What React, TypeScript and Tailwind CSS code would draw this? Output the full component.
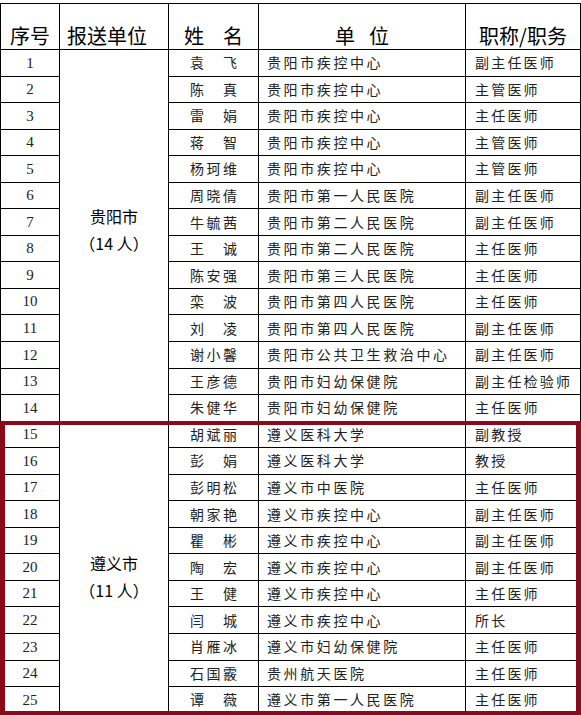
import React from "react";

type Row = { no: number; name: string; unit: string; title: string };

const rows: Row[] = [
  { no: 1, name: "袁飞", unit: "贵阳市疾控中心", title: "副主任医师" },
  { no: 2, name: "陈真", unit: "贵阳市疾控中心", title: "主管医师" },
  { no: 3, name: "雷娟", unit: "贵阳市疾控中心", title: "主任医师" },
  { no: 4, name: "蒋智", unit: "贵阳市疾控中心", title: "主管医师" },
  { no: 5, name: "杨珂维", unit: "贵阳市疾控中心", title: "主管医师" },
  { no: 6, name: "周晓倩", unit: "贵阳市第一人民医院", title: "副主任医师" },
  { no: 7, name: "牛毓茜", unit: "贵阳市第二人民医院", title: "副主任医师" },
  { no: 8, name: "王诚", unit: "贵阳市第二人民医院", title: "主任医师" },
  { no: 9, name: "陈安强", unit: "贵阳市第三人民医院", title: "主任医师" },
  { no: 10, name: "栾波", unit: "贵阳市第四人民医院", title: "主任医师" },
  { no: 11, name: "刘凌", unit: "贵阳市第四人民医院", title: "副主任医师" },
  { no: 12, name: "谢小馨", unit: "贵阳市公共卫生救治中心", title: "副主任医师" },
  { no: 13, name: "王彦德", unit: "贵阳市妇幼保健院", title: "副主任检验师" },
  { no: 14, name: "朱健华", unit: "贵阳市妇幼保健院", title: "主任医师" },
  { no: 15, name: "胡斌丽", unit: "遵义医科大学", title: "副教授" },
  { no: 16, name: "彭娟", unit: "遵义医科大学", title: "教授" },
  { no: 17, name: "彭明松", unit: "遵义市中医院", title: "主任医师" },
  { no: 18, name: "朝家艳", unit: "遵义市疾控中心", title: "副主任医师" },
  { no: 19, name: "瞿彬", unit: "遵义市疾控中心", title: "副主任医师" },
  { no: 20, name: "陶宏", unit: "遵义市疾控中心", title: "副主任医师" },
  { no: 21, name: "王健", unit: "遵义市疾控中心", title: "主任医师" },
  { no: 22, name: "闫城", unit: "遵义市疾控中心", title: "所长" },
  { no: 23, name: "肖雁冰", unit: "遵义市妇幼保健院", title: "主任医师" },
  { no: 24, name: "石国霰", unit: "贵州航天医院", title: "主任医师" },
  { no: 25, name: "谭薇", unit: "遵义市第一人民医院", title: "主任医师" },
];

const cjk = "font-['Noto_Sans_CJK_SC',sans-serif]";
const head = "flex items-end bg-white pb-[3px] text-[20px] leading-[20px] text-black whitespace-nowrap";

function Name({ value }: { value: string }) {
  // two-character names are spread to the width of three
  return (
    <div className="flex w-[47px] justify-between">
      {value.split("").map((c, i) => (
        <span key={i}>{c}</span>
      ))}
    </div>
  );
}

export default function App() {
  return (
    <div className={`relative h-[715px] w-[581px] overflow-hidden bg-white pt-[3px] ${cjk}`}>
      <div className="grid grid-cols-[58px_108px_89px_206px_114px] grid-rows-[45px_repeat(25,25.56px)] gap-px bg-black p-px text-[#222]">
        {/* header */}
        <div className={`${head} justify-center`}>序号</div>
        <div className={`${head} justify-start pl-[7px]`}>报送单位</div>
        <div className={`${head} justify-center gap-[19px]`}>
          <span>姓</span>
          <span>名</span>
        </div>
        <div className={`${head} justify-center gap-[14px]`}>
          <span>单</span>
          <span>位</span>
        </div>
        <div className={`${head} justify-center`}>职称/职务</div>

        {rows.map((r) => (
          <React.Fragment key={r.no}>
            <div className="flex items-center justify-center bg-white font-['Liberation_Serif',serif] text-[15px]">
              {r.no}
            </div>
            {r.no === 1 && (
              <div className="row-span-14 flex flex-col items-center justify-center bg-white pb-[10px] text-[16px] leading-[27px] text-black">
                <span>贵阳市</span>
                <span>（14 人）</span>
              </div>
            )}
            {r.no === 15 && (
              <div className="row-span-11 flex flex-col items-center justify-center bg-white pt-[20px] text-[16px] leading-[27px] text-black">
                <span>遵义市</span>
                <span>（11 人）</span>
              </div>
            )}
            <div className="flex items-center justify-center bg-white text-[14px]">
              <Name value={r.name} />
            </div>
            <div className="flex items-center whitespace-nowrap bg-white pl-[8px] text-[14px] tracking-[2.6px]">{r.unit}</div>
            <div className="flex items-center whitespace-nowrap bg-white pl-[9px] text-[14px] tracking-[2.2px]">{r.title}</div>
          </React.Fragment>
        ))}
      </div>

      {/* highlight box around the Zunyi group */}
      <div className="pointer-events-none absolute left-0 right-0 top-[421px] bottom-0 border-[4px] border-l-[5px] border-r-[5px] border-[#8a0a1c]" />
    </div>
  );
}
